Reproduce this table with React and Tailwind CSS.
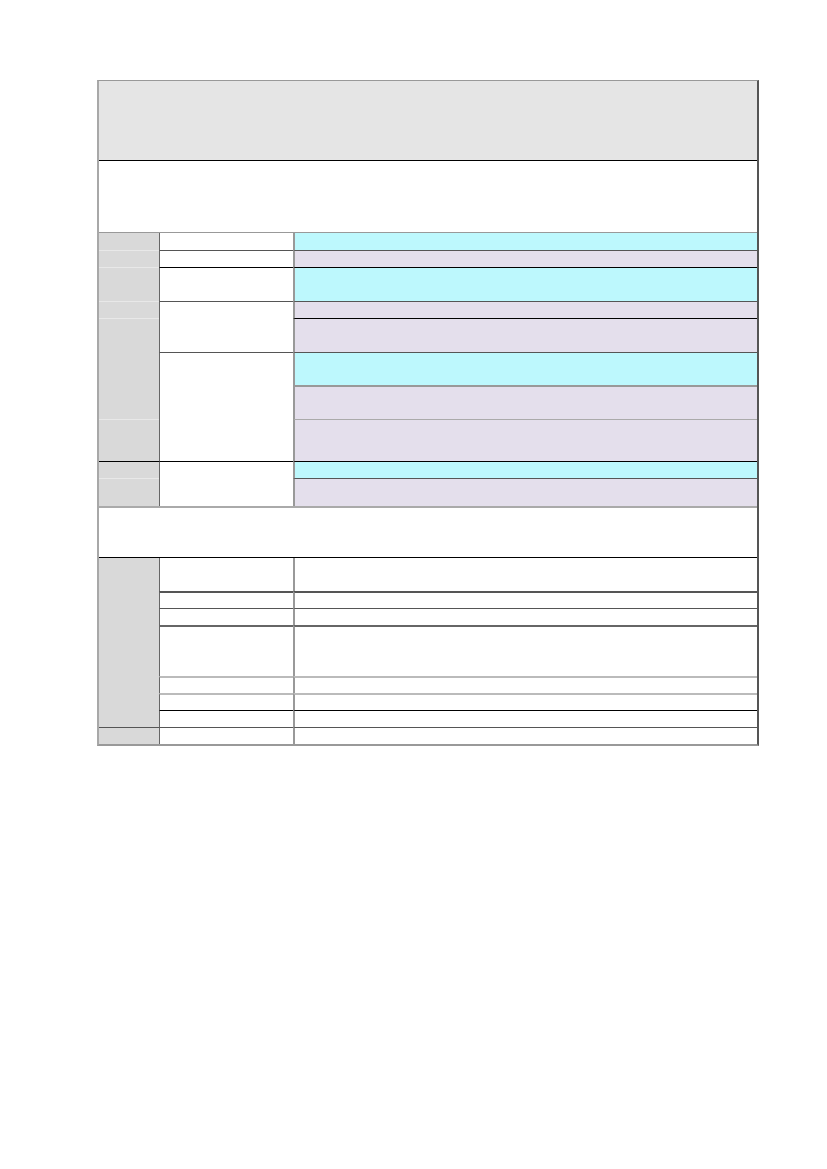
const topRows = [
  { pos: 'row-start-1', bg: 'bg-[#bdf8fd]', line: '' },
  { pos: 'row-start-2', bg: 'bg-[#e4dfec]', line: 'border-t border-[#555]' },
  { pos: 'row-start-3', bg: 'bg-[#bdf8fd]', line: 'border-t border-black' },
  { pos: 'row-start-4', bg: 'bg-[#e4dfec]', line: 'border-t border-[#555]' },
  { pos: 'row-start-5', bg: 'bg-[#e4dfec]', line: 'border-t border-black' },
  { pos: 'row-start-6', bg: 'bg-[#bdf8fd]', line: 'border-t border-[#555]' },
  { pos: 'row-start-7', bg: 'bg-[#e4dfec]', line: 'border-t-2 border-[#999]' },
  { pos: 'row-start-8', bg: 'bg-[#e4dfec]', line: 'border-t border-[#aaa]' },
  { pos: 'row-start-9', bg: 'bg-[#bdf8fd]', line: 'border-t border-black' },
  { pos: 'row-start-10', bg: 'bg-[#e4dfec]', line: 'border-t border-[#555]' },
];

const topMiddle = [
  'row-start-1',
  'row-start-2 border-t border-[#555]',
  'row-start-3 border-t border-black',
  'row-start-4 row-span-2 border-t border-[#555]',
  'row-start-6 row-span-3 border-t border-[#555]',
  'row-start-9 row-span-2 border-t border-black',
];

const topLeft = [
  'row-start-1',
  'row-start-2 border-t border-[#e8e8e8]',
  'row-start-3 border-t border-[#e8e8e8]',
  'row-start-4 border-t border-[#e8e8e8]',
  'row-start-5 row-span-3 border-t border-[#e8e8e8]',
  'row-start-8 border-t border-[#e8e8e8]',
  'row-start-9 border-t border-black',
  'row-start-10 border-t border-[#e8e8e8]',
];

const bottomRows = [
  'row-start-1',
  'row-start-2 border-t-2 border-[#555]',
  'row-start-3 border-t border-[#555]',
  'row-start-4 border-t-2 border-[#666]',
  'row-start-5 border-t-2 border-[#bbb]',
  'row-start-6 border-t-2 border-[#bbb]',
  'row-start-7 border-t border-black',
  'row-start-8 border-t border-[#555]',
];

const App = () => {
  return (
    <div className="min-h-[1169px] bg-white pt-[80px]">
      <div className="ml-[97px] w-[662px] border-t border-l-2 border-r-2 border-b-2 border-t-[#999] border-l-[#a8a8a8] border-r-[#555] border-b-[#999]">
        {/* title block */}
        <div className="h-[80px] bg-[#e5e5e5] border-b border-black" />
        <div className="h-[72px] bg-white border-b border-[#999]" />

        {/* first group */}
        <div className="grid grid-cols-[60px_134px_1fr] grid-rows-[17px_17px_34px_17px_34px_33px_34px_42px_17px_28px]">
          {topLeft.map((cls, i) => (
            <div key={`l${i}`} className={`col-start-1 bg-[#d9d9d9] ${cls}`} />
          ))}
          {topMiddle.map((cls, i) => (
            <div
              key={`m${i}`}
              className={`col-start-2 bg-white border-l border-l-[#666] ${cls}`}
            />
          ))}
          {topRows.map((row, i) => (
            <div
              key={`r${i}`}
              className={`col-start-3 border-l-2 border-l-[#999] ${row.pos} ${row.bg} ${row.line}`}
            />
          ))}
        </div>

        {/* second group */}
        <div className="h-[52px] bg-white border-t-2 border-t-[#aaa] border-b border-b-black" />
        <div className="grid grid-cols-[60px_134px_1fr] grid-rows-[33px_17px_17px_51px_17px_17px_17px_17px]">
          <div className="col-start-1 row-start-1 row-span-7 bg-[#d9d9d9]" />
          <div className="col-start-1 row-start-8 bg-[#d9d9d9] border-t border-[#555]" />
          {bottomRows.map((cls, i) => (
            <div
              key={`bm${i}`}
              className={`col-start-2 bg-white border-l border-l-[#666] ${cls}`}
            />
          ))}
          {bottomRows.map((cls, i) => (
            <div
              key={`br${i}`}
              className={`col-start-3 bg-white border-l-2 border-l-[#999] ${cls}`}
            />
          ))}
        </div>
      </div>
    </div>
  );
};

export default App;
